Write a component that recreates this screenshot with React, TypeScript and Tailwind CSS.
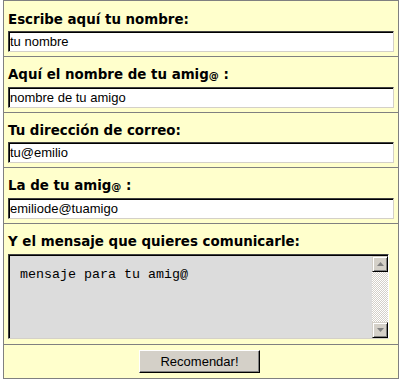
import React from 'react';

const labelCls = "block font-['DejaVu_Sans',Verdana,sans-serif] text-[13.4px] leading-4 font-bold text-black";
const inputCls =
  "block h-[21px] w-[386px] border border-t-[#404040] border-l-[#404040] border-b-[#d4d0c8] border-r-[#d4d0c8] bg-white px-[1px] font-['Liberation_Sans',Arial,sans-serif] text-[13px] text-black shadow-[inset_1px_1px_0_#000] outline-none";

function Amig() {
  return (
    <>
      amig<span className="text-[10px]">@</span> :
    </>
  );
}

function Field({ label, value, first }: { label: React.ReactNode; value: string; first?: boolean }) {
  return (
    <div className={`border-b border-[#808080] pb-[4px] pl-[4px] ${first ? 'pt-[11px]' : 'pt-[10px]'}`}>
      <label className={labelCls}>{label}</label>
      <input className={`${inputCls} mt-[3px]`} defaultValue={value} />
    </div>
  );
}

function ScrollBtn({ up }: { up?: boolean }) {
  return (
    <div className="flex h-[16px] w-[16px] items-center justify-center border border-t-[#d4d0c8] border-l-[#d4d0c8] border-b-black border-r-black bg-[#d4d0c8] shadow-[inset_1px_1px_0_#fff,inset_-1px_-1px_0_#808080]">
      <svg width="7" height="4" viewBox="0 0 7 4">
        {up ? <path d="M3.5 0 L7 4 L0 4 Z" fill="#808080" /> : <path d="M0 0 L7 0 L3.5 4 Z" fill="#808080" />}
      </svg>
    </div>
  );
}

export default function App() {
  return (
    <div className="h-[381px] w-[403px] bg-white">
      <div className="ml-[3px] w-[396px] border border-[#808080] bg-[#ffffcc]">
        <Field first label="Escribe aquí tu nombre:" value="tu nombre" />
        <Field label={<>Aquí el nombre de tu <Amig /></>} value="nombre de tu amigo" />
        <Field label="Tu dirección de correo:" value="tu@emilio" />
        <Field label={<>La de tu <Amig /></>} value="emiliode@tuamigo" />
        <div className="border-b border-[#808080] pb-[5px] pl-[4px] pt-[10px]">
          <label className={labelCls}>Y el mensaje que quieres comunicarle:</label>
          <div className="mt-[4px] flex h-[85px] w-[381px] border border-t-[#404040] border-l-[#404040] border-b-[#d4d0c8] border-r-white bg-[#dcdcdc] shadow-[inset_1px_1px_0_#000]">
            <div className="flex-1 pl-[11px] pt-[12px] font-['Liberation_Mono','Courier_New',monospace] text-[13.33px] leading-4 text-black">
              mensaje para tu amig@
            </div>
            <div className="mt-[1px] flex w-[16px] flex-col">
              <ScrollBtn up />
              <div className="flex-1 bg-[image:repeating-conic-gradient(#d4d0c8_0_25%,#ffffff_0_50%)] bg-[length:2px_2px]" />
              <ScrollBtn />
            </div>
          </div>
        </div>
        <div className="flex h-[33px] items-center justify-center pr-[3px]">
          <button className="h-[23px] w-[121px] border border-t-white border-l-white border-b-black border-r-black bg-[#d4d0c8] font-['Liberation_Sans',Arial,sans-serif] text-[13px] text-black shadow-[inset_-1px_-1px_0_#808080]">
            Recomendar!
          </button>
        </div>
      </div>
    </div>
  );
}
